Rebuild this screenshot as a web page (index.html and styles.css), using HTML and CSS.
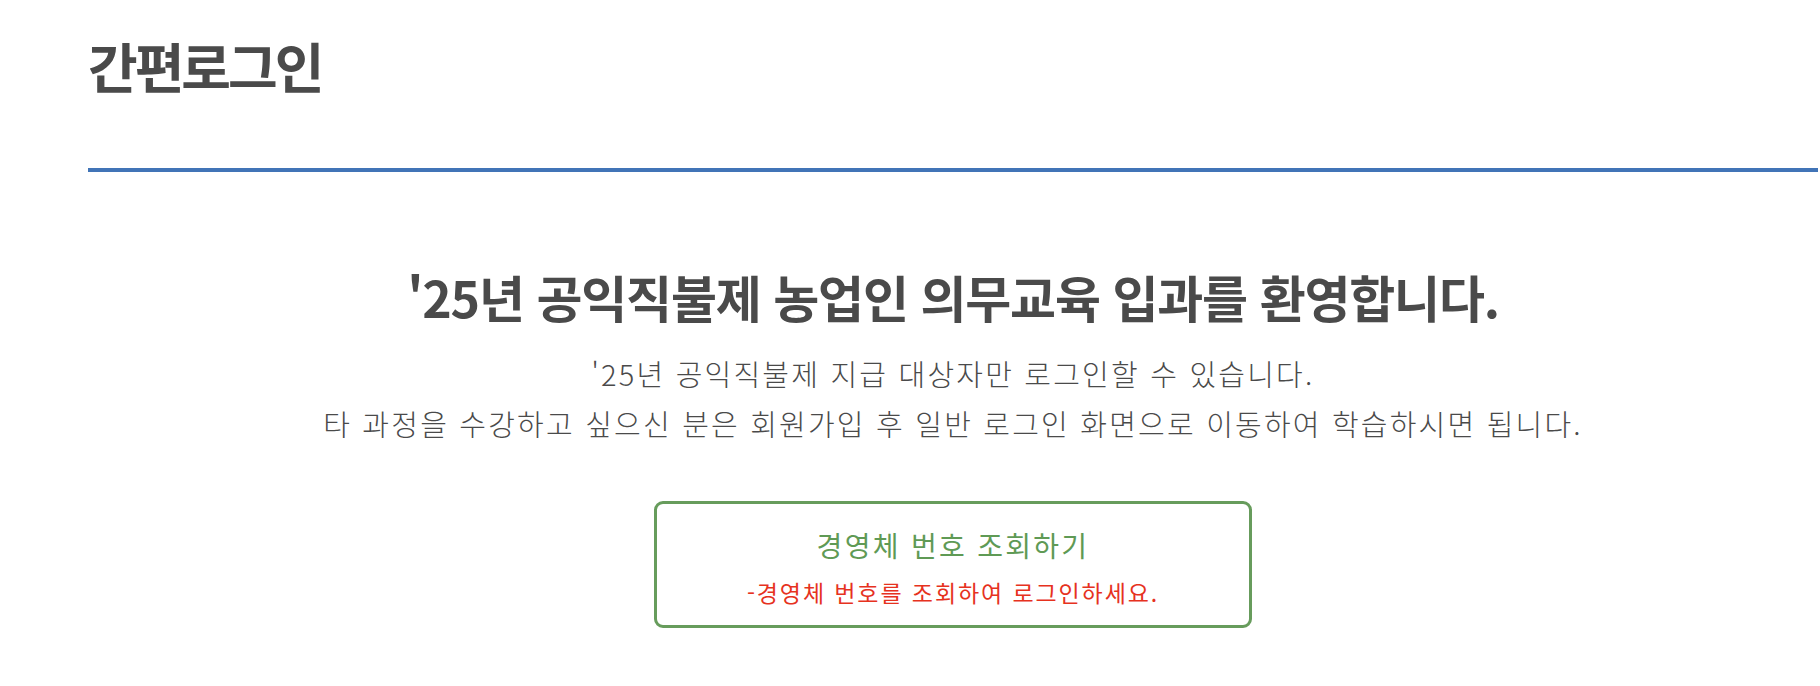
FILE: index.html
```html
<!DOCTYPE html>
<html lang="ko">
<head>
<meta charset="utf-8">
<title>간편로그인</title>
<link rel="stylesheet" href="styles.css">
</head>
<body>
<div class="page">
  <h1 class="title">간편로그인</h1>
  <div class="divider"></div>
  <section class="content">
    <h2 class="welcome">'25년 공익직불제 농업인 의무교육 입과를 환영합니다.</h2>
    <p class="desc">'25년 공익직불제 지급 대상자만 로그인할 수 있습니다.<br>타 과정을 수강하고 싶으신 분은 회원가입 후 일반 로그인 화면으로 이동하여 학습하시면 됩니다.</p>
    <a class="lookup" href="#">
      <span class="lookup-title">경영체 번호 조회하기</span>
      <span class="lookup-note">-경영체 번호를 조회하여 로그인하세요.</span>
    </a>
  </section>
</div>
</body>
</html>
```

FILE: styles.css
```css
html, body {
  margin: 0;
  padding: 0;
  background: #ffffff;
}
body {
  font-family: "Noto Sans CJK KR", "Noto Sans", sans-serif;
  color: #4a4a4a;
}
.page {
  padding: 0 2px 0 88px;
}
.title {
  margin: 0;
  padding-top: 37px;
  font-size: 54px;
  line-height: 58px;
  font-weight: 700;
  letter-spacing: -3px;
  color: #4a4a4a;
}
.divider {
  margin-top: 73px;
  height: 4px;
  background: #4174b7;
}
.content {
  display: flex;
  flex-direction: column;
  align-items: center;
  text-align: center;
}
.welcome {
  margin: 94px 0 0;
  font-size: 50px;
  line-height: 60px;
  font-weight: 700;
  letter-spacing: -1.2px;
  color: #4a4a4a;
}
.desc {
  margin: 22px 0 0;
  font-size: 29px;
  line-height: 50px;
  font-weight: 300;
  letter-spacing: 2.2px;
  color: #4a4a4a;
}
.lookup {
  margin-top: 53px;
  width: 598px;
  box-sizing: border-box;
  border: 3px solid #679c5c;
  border-radius: 9px;
  padding: 23px 0 18px;
  display: flex;
  flex-direction: column;
  align-items: center;
  gap: 14px;
  text-decoration: none;
}
.lookup-title {
  font-size: 28px;
  line-height: 36px;
  font-weight: 400;
  letter-spacing: 2.3px;
  color: #5f9a55;
}
.lookup-note {
  font-size: 23px;
  line-height: 30px;
  font-weight: 400;
  letter-spacing: 1.9px;
  color: #e6321e;
}
```
